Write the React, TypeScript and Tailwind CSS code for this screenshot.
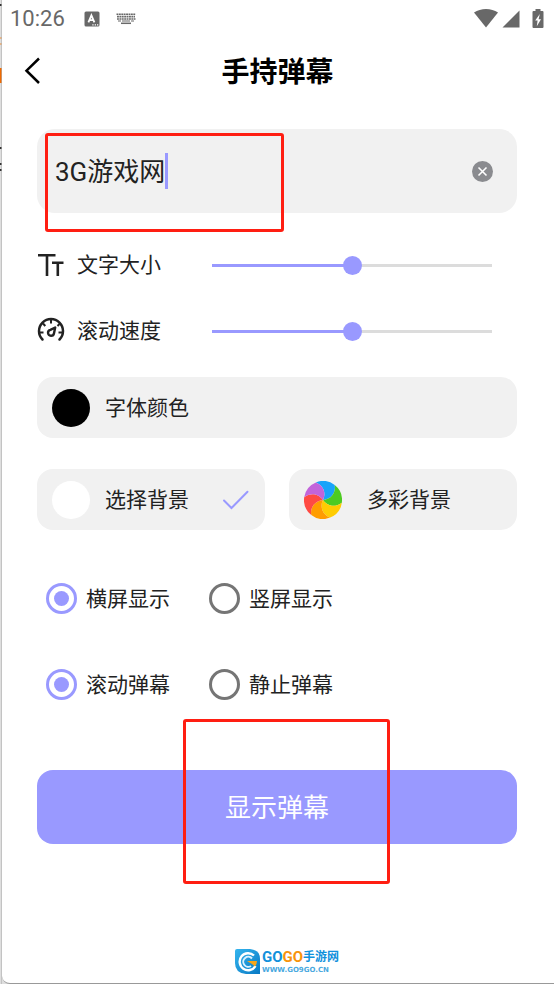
import { useState } from "react"

const sans = "font-['Roboto','Noto_Sans_CJK_SC',sans-serif]"

const WHEEL_COLORS = ["#19a3fa", "#4dcb22", "#ffcc02", "#ff9c00", "#ff4a43", "#c264da"]

const StatusBar = () => (
  <div className="flex h-[38px] items-center pl-2 pr-[10px] text-[#686868]">
    <span className="text-[22px] leading-6">10:26</span>
    <svg className="ml-[19px] h-4 w-4" viewBox="0 0 16 16" aria-hidden="true">
      <rect x="0.5" y="0.5" width="15" height="15" rx="1.5" fill="currentColor" />
      <path d="M4.4 11.4 7.4 4.4 10.4 11.4M5.5 9.2h3.8" fill="none" stroke="#fff" strokeWidth="1.8" />
      <path d="M8.3 13.8h1.3M10.7 13.8h1.3M13 13.8h1.3" stroke="#fff" strokeWidth="1.2" />
    </svg>
    <svg className="ml-4 h-3 w-5" viewBox="0 0 20 12" aria-hidden="true">
      <g stroke="currentColor" strokeWidth="1.6" fill="none">
        <path d="M0.5 1.2h19" strokeDasharray="1.9 0.5" />
        <path d="M1 3.6h18" strokeDasharray="1.9 0.5" />
        <path d="M1 6h18.5" strokeDasharray="1.9 0.5" />
        <path d="M2 8h3M6 8h8M15 8h3" strokeWidth="1.2" />
        <path d="M5 10.3h10" strokeWidth="1.5" />
      </g>
    </svg>
    <div className="ml-auto flex items-center">
      <svg className="h-5 w-6" viewBox="0 0 24 20" fill="currentColor" aria-hidden="true">
        <path d="M12 18.500 0 3.600C3.500 1.200 7.500 0 12 0s8.500 1.200 12 3.600z" />
      </svg>
      <svg className="ml-1 h-[18px] w-[18px]" viewBox="0 0 18 18" fill="currentColor" aria-hidden="true">
        <path d="M17.500.5v17H.5z" />
      </svg>
      <svg className="ml-3 h-5 w-3" viewBox="0 0 12 20" aria-hidden="true">
        <path d="M3.500 0h5v2h2q1 0 1 1v15q0 1-1 1h-9q-1 0-1-1V3q0-1 1-1h2z" fill="currentColor" />
        <path d="M7.800 5 3.200 11.500h2.400L4.800 17.200 9 10.300H6.600z" fill="#fff" />
      </svg>
    </div>
  </div>
)

const TextSizeIcon = () => (
  <svg className="h-7 w-7" viewBox="0 0 28 28" fill="none" stroke="#222" strokeWidth="2.600" aria-hidden="true">
    <path d="M1 4.300h17.500M10 4.300V25M15 11.800h11.500M20.800 11.800V25" />
  </svg>
)

const SpeedIcon = () => (
  <svg className="h-7 w-7" viewBox="0 0 28 28" fill="none" stroke="#222" aria-hidden="true">
    <path d="M5.500 22.500A12 12 0 1 1 22.500 22.500" strokeWidth="2.500" strokeLinecap="round" />
    <path d="M14 3v3.500M6 6.500 8.300 9M2.500 15.500h4M25.500 15.500h-4M22.500 7l-2 2" strokeWidth="2" />
    <path d="M18.200 10.500 17 16.200a3 3 0 1 1-3.600-3.400z" strokeWidth="2.400" strokeLinejoin="round" />
  </svg>
)

const ColorWheel = () => {
  const point = (i: number) => {
    const a = ((i * 60 - 112) * Math.PI) / 180
    return `${10 * Math.cos(a)} ${10 * Math.sin(a)}`
  }
  return (
    <svg className="h-[38px] w-[38px]" viewBox="-10 -10 20 20" aria-hidden="true">
      {WHEEL_COLORS.map((color, i) => (
        <path
          key={color}
          fill={color}
          d={`M0 0A6.600 6.600 0 0 0 ${point(i)}A10 10 0 0 1 ${point(i + 1)}A6.600 6.600 0 0 1 0 0`}
        />
      ))}
    </svg>
  )
}

type SliderRowProps = {
  id: string
  label: string
  icon: React.ReactNode
  value: number
  onChange: (value: number) => void
}

const SliderRow = ({ id, label, icon, value, onChange }: SliderRowProps) => (
  <div className="flex h-[34px] items-center pr-[25px]">
    <label htmlFor={id} className="flex w-[175px] shrink-0 items-center gap-3 text-[21px] leading-8">
      {icon}
      {label}
    </label>
    <input
      id={id}
      type="range"
      min={0}
      max={100}
      value={value}
      onChange={(e) => onChange(Number(e.target.value))}
      style={{
        backgroundImage: `linear-gradient(90deg, #9999ff ${value}%, #dcdcdc ${value}%)`,
      }}
      className="h-[3px] min-w-0 flex-1 appearance-none [&::-webkit-slider-thumb]:h-[19px] [&::-webkit-slider-thumb]:w-[19px] [&::-webkit-slider-thumb]:appearance-none [&::-webkit-slider-thumb]:rounded-full [&::-webkit-slider-thumb]:bg-[#9999ff]"
    />
  </div>
)

type RadioRowProps = {
  name: string
  options: string[]
  value: string
  onChange: (value: string) => void
}

const RadioRow = ({ name, options, value, onChange }: RadioRowProps) => (
  <div className="flex pl-[9px]">
    {options.map((option) => (
      <label key={option} className="flex h-[31px] w-[163px] items-center gap-[9px] text-[21px] leading-8">
        <input
          type="radio"
          name={name}
          checked={value === option}
          onChange={() => onChange(option)}
          className="h-[31px] w-[31px] shrink-0 appearance-none rounded-full border-3 border-[#757575] bg-white checked:border-[#9999ff] checked:bg-[#9999ff] checked:bg-clip-content checked:p-[5px]"
        />
        {option}
      </label>
    ))}
  </div>
)

const SiteLogo = () => (
  <a href="#" className="flex items-center gap-[2px]">
    <svg className="h-[25px] w-[25px]" viewBox="0 0 25 25" aria-hidden="true">
      <defs>
        <linearGradient id="badge" x1="0" y1="0" x2="1" y2="1">
          <stop offset="0" stopColor="#35b5ee" />
          <stop offset="1" stopColor="#0879c4" />
        </linearGradient>
      </defs>
      <path d="M2 0h13q10 1 10 10v15H11Q0 24 0 14V2q0-2 2-2z" fill="url(#badge)" />
      <path d="M19 6.500A8.500 8.500 0 1 0 20.500 17" fill="none" stroke="#fff" strokeWidth="2.400" />
      <path d="M17 9.500a5 5 0 1 0-1 7.500" fill="none" stroke="#d9f1ff" strokeWidth="2" />
      <path d="M12 12h10q0 3-2 5.500l-3-2.500z" fill="#f9a61b" />
    </svg>
    <span className="flex flex-col">
      <span className="flex h-[18px] items-center font-bold leading-[18px] text-[#1191dc]">
        <span className="text-[15px]">
          GO<span className="text-[#f8930c]">GO</span>
        </span>
        <span className="text-[12px]">手游网</span>
      </span>
      <span className="font-['DejaVu_Sans',sans-serif] text-[7px] font-bold leading-[9px] text-[#4aa9e0]">
        WWW.GO9GO.CN
      </span>
    </span>
  </a>
)

// Sliver of the window that sits behind the phone frame
const WindowEdge = () => (
  <svg className="h-[984px] w-[2px] shrink-0" viewBox="0 0 2 984" aria-hidden="true">
    <path d="M0 0h2v984H0z" fill="#dedede" />
    <path d="M0 5h2M0 148h2M0 164h2M0 170h2" stroke="#333" strokeWidth="2" />
    <path d="M0 38h2M0 44h2" stroke="#f08a2c" />
    <path d="M0 68h2v15H0z" fill="#f06a00" />
    <path d="M1.500 0v984" stroke="#b0b0b0" strokeOpacity="0.600" />
  </svg>
)

export default function App() {
  const [text, setText] = useState("3G游戏网")
  const [size, setSize] = useState(50)
  const [speed, setSpeed] = useState(50)
  const [background, setBackground] = useState("solid")
  const [orientation, setOrientation] = useState("横屏显示")
  const [motion, setMotion] = useState("滚动弹幕")

  return (
    <div className={`flex min-h-screen overflow-hidden bg-[#dedede] text-[#222] ${sans}`}>
      <WindowEdge />
      <div className="flex min-w-0 flex-1 flex-col rounded-bl-lg border-b border-[#999] bg-white">
        <StatusBar />

        <header className="grid h-[66px] grid-cols-[1fr_auto_1fr] items-center pl-5 pr-[21px]">
          <button type="button" aria-label="返回" className="w-6">
            <svg className="h-7 w-5" viewBox="0 0 20 28" fill="none" stroke="#000" strokeWidth="2.500" aria-hidden="true">
              <path d="M17 1.500 4.500 13.700 17 26" />
            </svg>
          </button>
          <h1 className="pt-1 text-[28px] font-bold leading-9 text-black">手持弹幕</h1>
        </header>

        <main className="flex flex-1 flex-col pl-[35px] pr-[37px] pt-[25px]">
          <div className="relative flex h-[84px] items-center rounded-[18px] bg-[#f1f1f1] pl-[18px] pr-6">
            <input
              type="text"
              aria-label="弹幕内容"
              value={text}
              onChange={(e) => setText(e.target.value)}
              className="min-w-0 bg-transparent pt-[2px] text-[26px] leading-9 caret-transparent outline-none [field-sizing:content]"
            />
            <span className="h-9 w-[3px] shrink-0 bg-[#9999ff]" />
            <button type="button" aria-label="清空" onClick={() => setText("")} className="ml-auto">
              <svg className="h-[21px] w-[21px]" viewBox="0 0 21 21" aria-hidden="true">
                <circle cx="10.500" cy="10.500" r="10.500" fill="#8a8b8f" />
                <path d="m6.500 6.500 8 8m0-8-8 8" stroke="#fff" strokeWidth="1.600" />
              </svg>
            </button>
            <div className="pointer-events-none absolute left-2 top-1 h-[99px] w-[239px] rounded-[3px] border-3 border-[#ff1e12]" />
          </div>

          <div className="mt-[35px] flex flex-col gap-8">
            <SliderRow id="size" label="文字大小" icon={<TextSizeIcon />} value={size} onChange={setSize} />
            <SliderRow id="speed" label="滚动速度" icon={<SpeedIcon />} value={speed} onChange={setSpeed} />
          </div>

          <button
            type="button"
            className="mt-[29px] flex h-[61px] items-center gap-[15px] rounded-2xl bg-[#f1f1f1] px-[15px] text-[21px] leading-8"
          >
            <span className="h-[38px] w-[38px] rounded-full bg-black" />
            字体颜色
          </button>

          <div className="mt-[31px] grid grid-cols-2 gap-6">
            <button
              type="button"
              onClick={() => setBackground("solid")}
              className="flex h-[61px] items-center gap-[15px] rounded-2xl bg-[#f1f1f1] px-[15px] text-[21px] leading-8"
            >
              <span className="h-[38px] w-[38px] rounded-full bg-white" />
              选择背景
              {background === "solid" && (
                <svg
                  className="ml-auto h-5 w-7"
                  viewBox="0 0 28 20"
                  fill="none"
                  stroke="#9999ff"
                  strokeWidth="2"
                  strokeLinecap="round"
                  aria-hidden="true"
                >
                  <path d="m2 10.500 7.500 7.500L25.500 1.800" />
                </svg>
              )}
            </button>
            <button
              type="button"
              onClick={() => setBackground("colorful")}
              className="flex h-[61px] items-center gap-[25px] rounded-2xl bg-[#f1f1f1] px-[15px] text-[21px] leading-8"
            >
              <ColorWheel />
              多彩背景
            </button>
          </div>

          <div className="mt-[53px] flex flex-col gap-[55px]">
            <RadioRow
              name="orientation"
              options={["横屏显示", "竖屏显示"]}
              value={orientation}
              onChange={setOrientation}
            />
            <RadioRow name="motion" options={["滚动弹幕", "静止弹幕"]} value={motion} onChange={setMotion} />
          </div>

          <div className="relative mt-[70px]">
            <button
              type="button"
              className="h-[74px] w-full rounded-2xl bg-[#9999ff] pt-[2px] text-[26px] leading-9 text-white"
            >
              显示弹幕
            </button>
            <div className="pointer-events-none absolute -top-[51px] left-[146px] h-[165px] w-[207px] rounded-[3px] border-3 border-[#ff1e12]" />
          </div>
        </main>

        <footer className="flex justify-center pb-2 pl-[18px]">
          <SiteLogo />
        </footer>
      </div>
    </div>
  )
}
